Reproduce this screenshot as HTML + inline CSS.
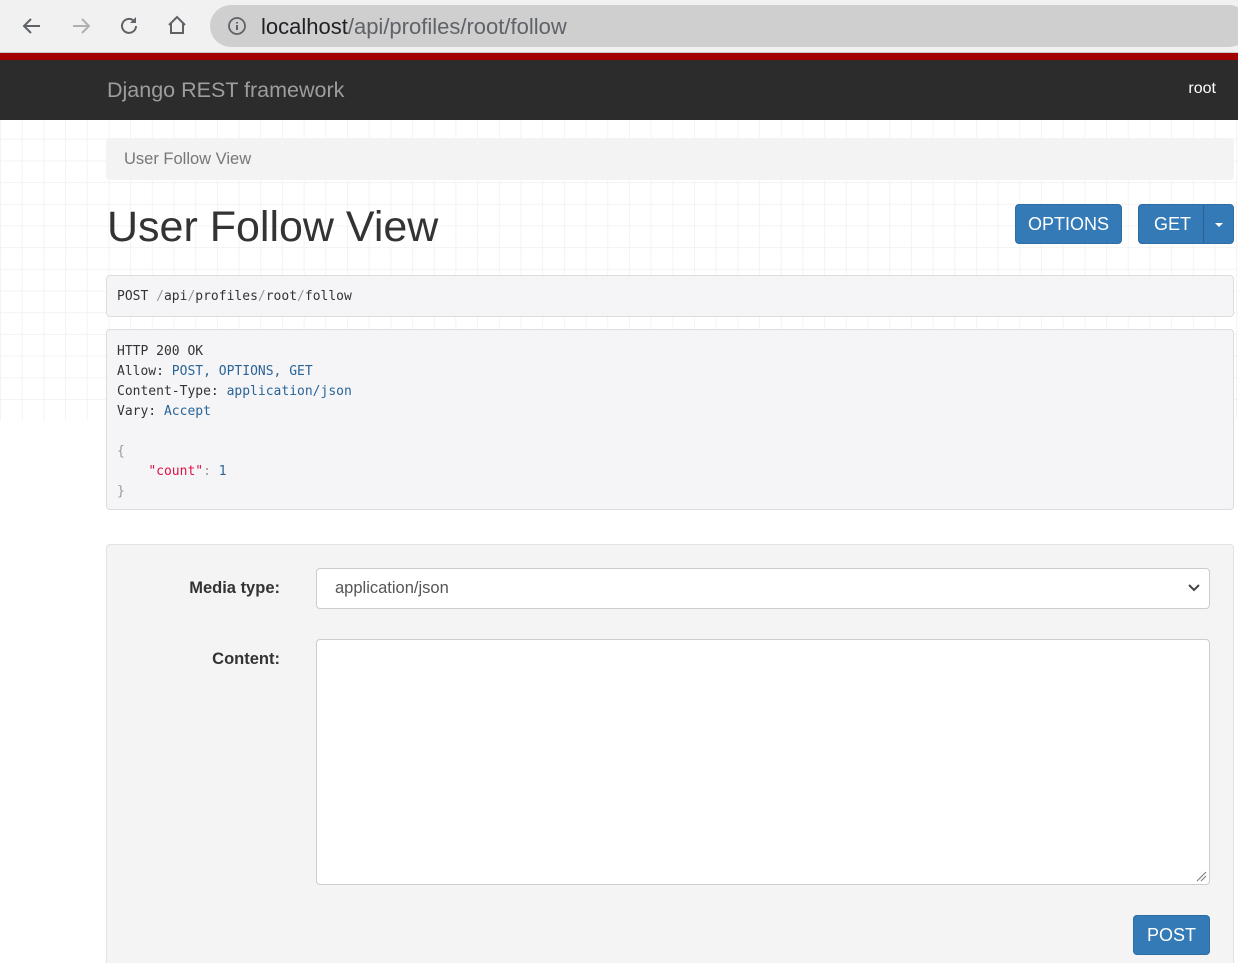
<!DOCTYPE html>
<html><head><style>
*{box-sizing:border-box;margin:0;padding:0}
html,body{width:1238px;height:963px;overflow:hidden}
body{background:#fff;font-family:"Liberation Sans",Arial,sans-serif;position:relative}
.chrome{position:absolute;left:0;top:0;width:1238px;height:53px;background:#f1f1f1;border-bottom:1px solid #ccc}
.addr{position:absolute;left:210px;top:5px;width:1040px;height:42px;border-radius:21px;background:#cfcfcf}
.url{position:absolute;left:261px;top:14px;font-size:22px;color:#202124}
.url span{color:#5f6368}
.red{position:absolute;left:0;top:53px;width:1238px;height:7px;background:#a30000}
.nav{position:absolute;left:0;top:60px;width:1238px;height:60px;background:#2c2c2c}
.brand{position:absolute;left:107px;top:78px;font-size:21.5px;color:#9d9d9d}
.user{position:absolute;right:22px;top:80px;font-size:16px;color:#fff}
.grid{position:absolute;left:0;top:120px;width:1238px;height:300px;background-image:linear-gradient(#f3f3f3 1px,transparent 1px),linear-gradient(90deg,#f3f3f3 1px,transparent 1px);background-size:21.7px 21.7px;background-position:0 -3px}
.bc{position:absolute;left:106px;top:138px;width:1128px;height:42px;background:#f3f3f3;border-radius:4px;padding:12px 18px;font-size:16.5px;color:#777}
h1{position:absolute;left:107px;top:203px;font-size:43px;font-weight:400;color:#333}
.btn{position:absolute;background:#337ab7;border:1px solid #2e6da4;color:#fff;border-radius:4px;font-size:18px;text-align:center}
pre{font-family:"DejaVu Sans Mono","Liberation Mono",monospace;font-size:13px;color:#333}
.box{position:absolute;left:106px;width:1128px;background:#f5f5f7;border:1px solid #ddd;border-radius:4px;padding:0 10px}
.b{color:#2a6496}.k{color:#dd1144}.g{color:#999}.s{color:#2a6496}
.form{position:absolute;left:106px;top:544px;width:1128px;height:430px;background:#f4f4f4;border:1px solid #e3e3e3;border-radius:4px}
.lbl{position:absolute;font-size:16.5px;font-weight:bold;color:#333;text-align:right;width:174px}
.inp{position:absolute;background:#fff;border:1px solid #ccc;border-radius:4px}
</style></head><body>
<div class="chrome">
<svg style="position:absolute;left:20px;top:14px" width="24" height="24" viewBox="0 0 24 24"><path d="M20 12H5M11 5l-7 7 7 7" fill="none" stroke="#5f6368" stroke-width="2"/></svg>
<svg style="position:absolute;left:69px;top:14px" width="24" height="24" viewBox="0 0 24 24"><path d="M4 12h15M13 5l7 7-7 7" fill="none" stroke="#b0b0b0" stroke-width="2"/></svg>
<svg style="position:absolute;left:117px;top:14px" width="24" height="24" viewBox="0 0 24 24"><path d="M19 12a7 7 0 1 1-2-5" fill="none" stroke="#5f6368" stroke-width="2"/><path d="M19 3v6h-6z" fill="#5f6368"/></svg>
<svg style="position:absolute;left:165px;top:13px" width="24" height="24" viewBox="0 0 24 24"><path d="M4 12L12 4l8 8M6 10v10h12V10" fill="none" stroke="#5f6368" stroke-width="2"/></svg>
<div class="addr"></div>
<svg style="position:absolute;left:227px;top:16px" width="20" height="20" viewBox="0 0 20 20"><circle cx="10" cy="10" r="8" fill="none" stroke="#5f6368" stroke-width="1.8"/><path d="M10 9v5M10 6v1.5" stroke="#5f6368" stroke-width="2"/></svg>
<div class="url">localhost<span>/api/profiles/root/follow</span></div>
</div>
<div class="red"></div>
<div class="nav"></div>
<div class="brand">Django REST framework</div>
<div class="user">root</div>
<div class="grid"></div>
<div class="bc">User Follow View</div>
<h1>User Follow View</h1>
<div class="btn" style="left:1015px;top:204px;width:107px;height:40px;line-height:38px">OPTIONS</div>
<div class="btn" style="left:1138px;top:204px;width:96px;height:40px;line-height:38px;text-align:left;padding-left:15px">GET<span style="position:absolute;left:64px;top:0;width:1px;height:38px;background:#2a6193"></span><span style="position:absolute;left:76px;top:18px;border-left:4px solid transparent;border-right:4px solid transparent;border-top:4px solid #fff"></span></div>
<div class="box" style="top:275px;height:42px;padding-top:13px"><pre>POST <span class="g">/</span>api<span class="g">/</span>profiles<span class="g">/</span>root<span class="g">/</span>follow</pre></div>
<div class="box" style="top:329px;height:181px;padding-top:12px"><pre style="line-height:20px">HTTP 200 OK
Allow: <span class="b">POST, OPTIONS, GET</span>
Content-Type: <span class="b">application/json</span>
Vary: <span class="b">Accept</span>

<span class="g">{</span>
    <span class="k">"count"</span><span class="g">:</span> <span class="s">1</span>
<span class="g">}</span></pre></div>
<div class="form"></div>
<div class="lbl" style="left:106px;top:579px">Media type:</div>
<div class="inp" style="left:316px;top:568px;width:894px;height:41px;padding:10px 18px;font-size:16.5px;color:#555">application/json
<svg style="position:absolute;right:9px;top:15px" width="12" height="8" viewBox="0 0 12 8"><path d="M1 1l5 5 5-5" fill="none" stroke="#444" stroke-width="2"/></svg></div>
<div class="lbl" style="left:106px;top:650px">Content:</div>
<div class="inp" style="left:316px;top:639px;width:894px;height:246px">
<svg style="position:absolute;right:2px;bottom:2px" width="12" height="12" viewBox="0 0 12 12"><path d="M11 2L2 11M11 6L6 11" stroke="#777" stroke-width="1"/></svg></div>
<div class="btn" style="left:1133px;top:915px;width:77px;height:40px;line-height:38px">POST</div>
</body></html>
